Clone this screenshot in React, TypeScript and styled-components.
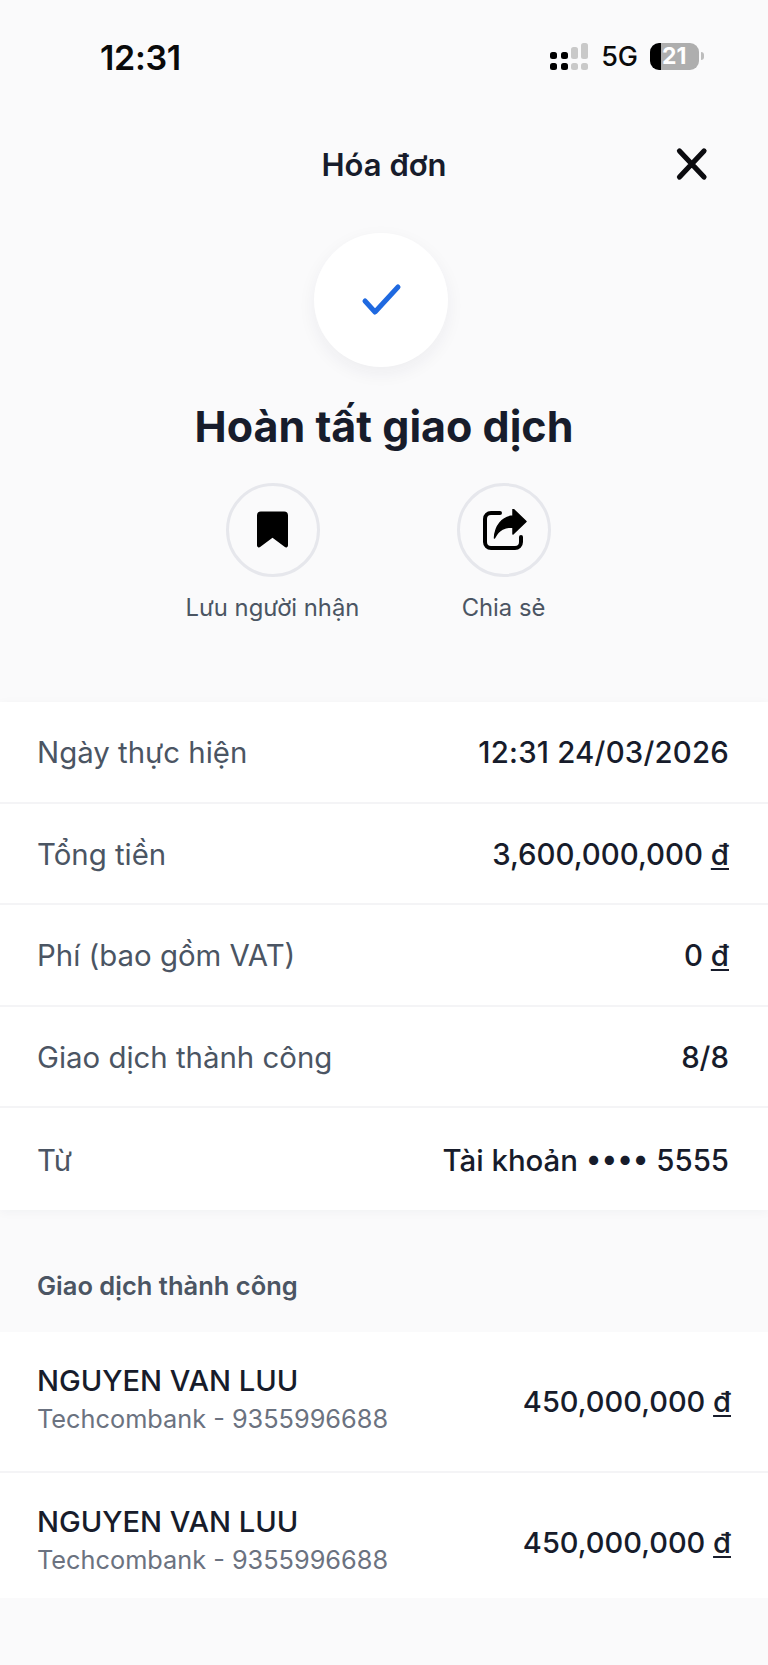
import React from "react";
import styled, { createGlobalStyle } from "styled-components";

const GlobalStyle = createGlobalStyle`
  html, body {
    margin: 0;
    padding: 0;
    background: #fafafb;
  }
  * {
    box-sizing: border-box;
  }
`;

const Page = styled.div`
  width: 768px;
  height: 1665px;
  overflow: hidden;
  background: #fafafb;
  font-family: Inter, "Liberation Sans", sans-serif;
  color: #171c2b;
`;

const StatusBar = styled.div`
  height: 114px;
  padding: 0 64px 0 100px;
  display: flex;
  align-items: center;
  justify-content: space-between;
`;

const Clock = styled.span`
  font-size: 34px;
  font-weight: 600;
  color: #0a0a0a;
  letter-spacing: -0.3px;
`;

const StatusIcons = styled.div`
  display: flex;
  align-items: center;
  margin-bottom: 2px;
`;

const Network = styled.span`
  margin: 0 12px 0 13px;
  font-size: 27px;
  font-weight: 500;
  color: #0a0a0a;
`;

const Battery = styled.div`
  position: relative;
  width: 49px;
  height: 27px;
  border-radius: 9px;
  overflow: hidden;
  background: linear-gradient(to right, #000 0 11px, #aeaeae 11px);
  color: #fff;
  font-size: 23px;
  font-weight: 700;
  line-height: 27px;
  padding-left: 12px;
`;

const BatteryCap = styled.div`
  width: 3px;
  height: 8px;
  margin-left: 2px;
  border-radius: 0 3px 3px 0;
  background: #bdbdbd;
`;

const Header = styled.header`
  height: 102px;
  display: grid;
  grid-template-columns: 1fr auto 1fr;
  align-items: center;
`;

const HeaderTitle = styled.h2`
  grid-column: 2;
  margin: 0 0 2px;
  font-size: 31px;
  font-weight: 600;
`;

const CloseButton = styled.button`
  grid-column: 3;
  justify-self: end;
  margin: 0 58px 2px 0;
  padding: 0;
  display: flex;
  border: 0;
  background: none;
`;

const Hero = styled.section`
  display: flex;
  flex-direction: column;
  align-items: center;
  height: 486px;
  padding-top: 17px;
`;

const CheckCircle = styled.div`
  width: 134px;
  height: 134px;
  margin-right: 7px;
  border-radius: 50%;
  background: #fff;
  box-shadow: 0 6px 18px rgba(30, 40, 70, 0.06);
  display: flex;
  align-items: center;
  justify-content: center;
`;

const Heading = styled.h1`
  margin: 31px 0 0;
  font-size: 43px;
  line-height: 56px;
  font-weight: 700;
`;

const Actions = styled.div`
  margin: 29px 0 0 8px;
  display: grid;
  grid-template-columns: 231px 231px;
`;

const Action = styled.div`
  display: flex;
  flex-direction: column;
  align-items: center;
`;

const ActionCircle = styled.div`
  width: 94px;
  height: 94px;
  border: 3px solid #e6e7ec;
  border-radius: 50%;
  display: flex;
  align-items: center;
  justify-content: center;
`;

const ActionLabel = styled.span`
  margin-top: 16px;
  font-size: 23.8px;
  line-height: 30px;
  color: #4b5563;
`;

const Card = styled.section`
  background: #fff;
  box-shadow: 0 2px 10px rgba(30, 40, 70, 0.04);
`;

const InfoRow = styled.div`
  height: 101.6px;
  padding: 2px 39px 0 37px;
  display: flex;
  align-items: center;
  justify-content: space-between;
  font-size: 29.4px;
  border-bottom: 2px solid #f4f4f6;

  &:last-child {
    border-bottom: 0;
  }
`;

const InfoLabel = styled.span`
  color: #4b5563;
`;

const InfoValue = styled.span<{ $tracking?: number }>`
  font-weight: 500;
  letter-spacing: ${(props) => props.$tracking ?? 0}px;
  color: #171c2b;
`;

const Dong = styled.span`
  text-decoration: underline;
  text-underline-offset: 3px;
`;

const SectionTitle = styled.h3`
  height: 122px;
  margin: 0;
  padding: 30px 0 0 37px;
  display: flex;
  align-items: center;
  font-size: 25.5px;
  font-weight: 600;
  color: #4b5563;
`;

const TransferList = styled.section`
  background: #fff;
`;

const TransferRow = styled.div<{ $bottom: number }>`
  padding: 30px 37px ${(props) => props.$bottom}px 37px;
  display: flex;
  align-items: center;
  justify-content: space-between;
  border-bottom: 2px solid #f4f4f6;

  &:last-child {
    border-bottom: 0;
  }
`;

const Recipient = styled.div`
  display: flex;
  flex-direction: column;
`;

const RecipientName = styled.span`
  font-size: 29.1px;
  line-height: 38px;
  font-weight: 500;
`;

const RecipientBank = styled.span`
  margin-top: 1px;
  font-size: 25.3px;
  line-height: 36px;
  color: #6b7280;
`;

const Amount = styled.span`
  margin-top: 4px;
  font-size: 29px;
  font-weight: 500;
`;

const ShareGlyph = styled.svg`
  margin-left: 3px;
`;

const SignalIcon = () => (
  <svg width="38" height="27" viewBox="0 0 38 27">
    <rect x="0" y="9" width="7" height="7" rx="2.5" fill="#000" />
    <rect x="11" y="9" width="7" height="7" rx="2.5" fill="#000" />
    <rect x="0" y="20" width="7" height="7" rx="2.5" fill="#000" />
    <rect x="11" y="20" width="7" height="7" rx="2.5" fill="#000" />
    <rect x="21" y="4" width="7" height="12" rx="2.5" fill="#c9c9c9" />
    <rect x="31" y="0" width="7" height="16" rx="2.5" fill="#c9c9c9" />
    <rect x="21" y="20" width="7" height="7" rx="2.5" fill="#c9c9c9" />
    <rect x="31" y="20" width="7" height="7" rx="2.5" fill="#c9c9c9" />
  </svg>
);

const CloseIcon = () => (
  <svg width="38" height="38" viewBox="0 0 38 38" fill="none">
    <path d="M7.5 6 L32 32 M32 6 L7.5 32" stroke="#0b0b0f" strokeWidth="5.2" strokeLinecap="round" />
  </svg>
);

const CheckIcon = () => (
  <svg width="46" height="40" viewBox="0 0 46 40" fill="none">
    <path d="M7 21 L17 32 L40 7" stroke="#1f69e0" strokeWidth="5" strokeLinecap="round" strokeLinejoin="round" />
  </svg>
);

const BookmarkIcon = () => (
  <svg width="31" height="38" viewBox="0 0 32 38">
    <path
      d="M4 0 H28 A4 4 0 0 1 32 4 V35 A2 2 0 0 1 28.8 36.6 L16 27 L3.2 36.6 A2 2 0 0 1 0 35 V4 A4 4 0 0 1 4 0 Z"
      fill="#000"
    />
  </svg>
);

const ShareIcon = () => (
  <ShareGlyph width="44" height="42" viewBox="0 0 44 42" fill="none">
    <path
      d="M17 4 H8 A6 6 0 0 0 2 10 V33 A6 6 0 0 0 8 39 H32 A6 6 0 0 0 38 33 V28"
      stroke="#000"
      strokeWidth="4"
      strokeLinecap="round"
    />
    <path
      d="M30 0 L43 12.5 L30 25 V18 C22 18 16 20 11.5 29 C12 17 19 8 30 7 Z"
      fill="#000"
      stroke="#000"
      strokeWidth="1.5"
      strokeLinejoin="round"
    />
  </ShareGlyph>
);

const infoRows = [
  { label: "Ngày thực hiện", value: "12:31 24/03/2026", tracking: 0.2 },
  { label: "Tổng tiền", value: "3,600,000,000", dong: true },
  { label: "Phí (bao gồm VAT)", value: "0", dong: true },
  { label: "Giao dịch thành công", value: "8/8" },
  { label: "Từ", value: "Tài khoản •••• 5555" },
];

const transfers = [
  { name: "NGUYEN VAN LUU", bank: "Techcombank - 9355996688", amount: "450,000,000", bottom: 34 },
  { name: "NGUYEN VAN LUU", bank: "Techcombank - 9355996688", amount: "450,000,000", bottom: 20 },
];

const App: React.FC = () => {
  return (
    <Page>
      <GlobalStyle />
      <StatusBar>
        <Clock>12:31</Clock>
        <StatusIcons>
          <SignalIcon />
          <Network>5G</Network>
          <Battery>21</Battery>
          <BatteryCap />
        </StatusIcons>
      </StatusBar>
      <Header>
        <HeaderTitle>Hóa đơn</HeaderTitle>
        <CloseButton>
          <CloseIcon />
        </CloseButton>
      </Header>
      <Hero>
        <CheckCircle>
          <CheckIcon />
        </CheckCircle>
        <Heading>Hoàn tất giao dịch</Heading>
        <Actions>
          <Action>
            <ActionCircle>
              <BookmarkIcon />
            </ActionCircle>
            <ActionLabel>Lưu người nhận</ActionLabel>
          </Action>
          <Action>
            <ActionCircle>
              <ShareIcon />
            </ActionCircle>
            <ActionLabel>Chia sẻ</ActionLabel>
          </Action>
        </Actions>
      </Hero>
      <Card>
        {infoRows.map((row) => (
          <InfoRow key={row.label}>
            <InfoLabel>{row.label}</InfoLabel>
            <InfoValue $tracking={row.tracking}>
              {row.value}
              {row.dong && (
                <>
                  {" "}
                  <Dong>đ</Dong>
                </>
              )}
            </InfoValue>
          </InfoRow>
        ))}
      </Card>
      <SectionTitle>Giao dịch thành công</SectionTitle>
      <TransferList>
        {transfers.map((item, index) => (
          <TransferRow key={index} $bottom={item.bottom}>
            <Recipient>
              <RecipientName>{item.name}</RecipientName>
              <RecipientBank>{item.bank}</RecipientBank>
            </Recipient>
            <Amount>
              {item.amount} <Dong>đ</Dong>
            </Amount>
          </TransferRow>
        ))}
      </TransferList>
    </Page>
  );
};

export default App;
